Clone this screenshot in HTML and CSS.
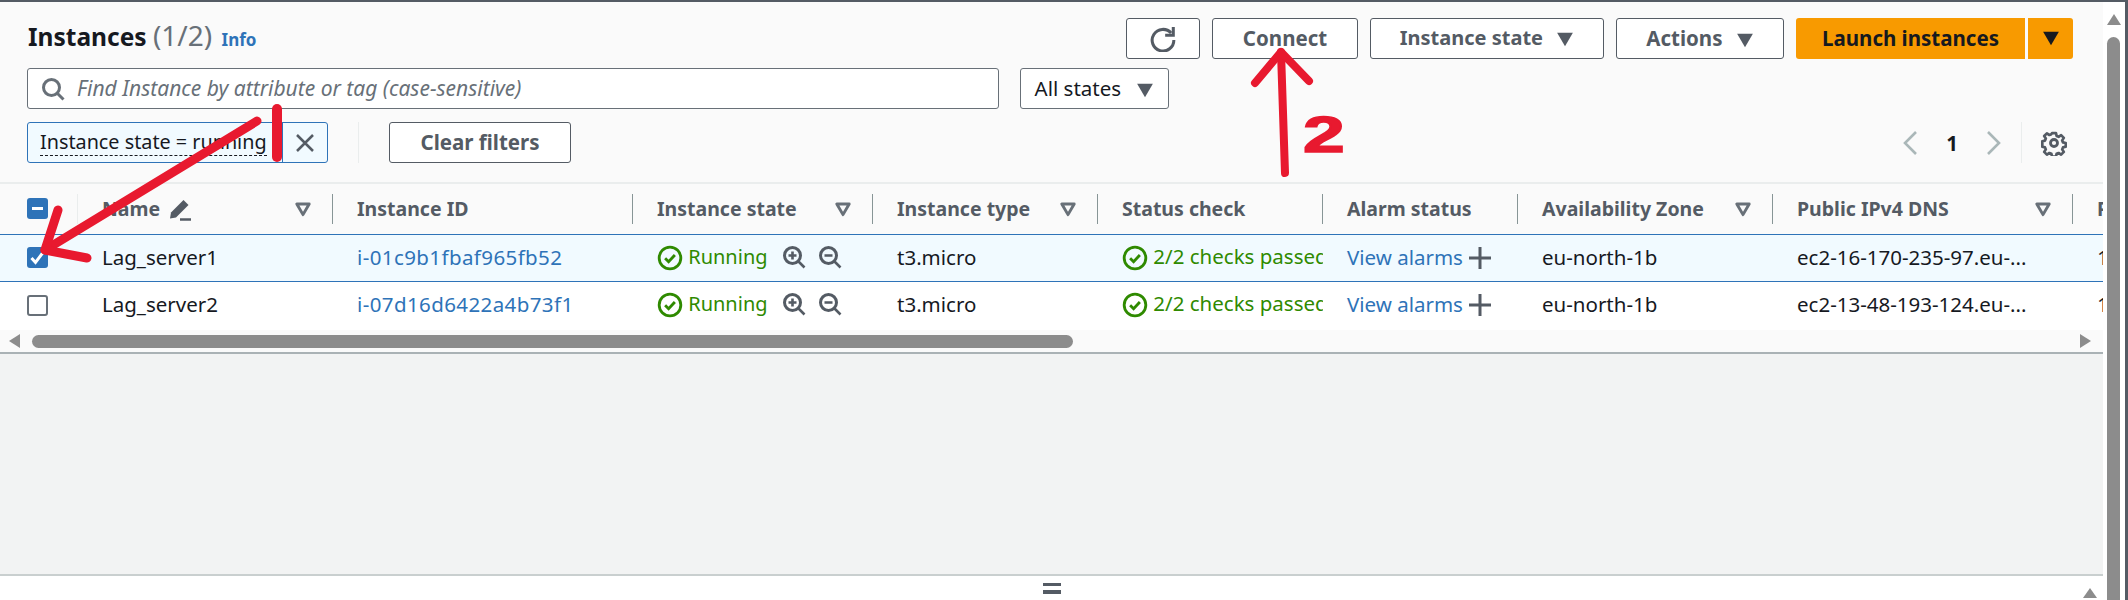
FILE: index.html
```html
<!DOCTYPE html>
<html lang="en">
<head>
    <meta charset="UTF-8">
    <title>Instances</title>
    <link rel="stylesheet" href="styles.css">
</head>
<body>

    <svg class="defs" width="0" height="0">
        <symbol id="caret" viewBox="0 0 16 16"><path d="M1 2.500h14L8 14.500z" fill="currentColor"/></symbol>
        <symbol id="sort" viewBox="0 0 16 16"><path d="M2.500 3.500h11L8 13z" fill="none" stroke="currentColor" stroke-width="2.600" stroke-linejoin="round"/></symbol>
        <symbol id="ok" viewBox="0 0 24 24"><circle cx="12" cy="12" r="10" fill="none" stroke="currentColor" stroke-width="2.600"/><path d="M7.500 12.300l3.200 3.200 5.800-6.300" fill="none" stroke="currentColor" stroke-width="2.600"/></symbol>
        <symbol id="zoom-in" viewBox="0 0 24 24"><circle cx="10.500" cy="10.500" r="8" fill="none" stroke="currentColor" stroke-width="3"/><path d="M16.500 16.500l6 6M6.500 10.500h8M10.500 6.500v8" fill="none" stroke="currentColor" stroke-width="2.600"/></symbol>
        <symbol id="zoom-out" viewBox="0 0 24 24"><circle cx="10.500" cy="10.500" r="8" fill="none" stroke="currentColor" stroke-width="3"/><path d="M16.500 16.500l6 6M6.500 10.500h8" fill="none" stroke="currentColor" stroke-width="2.600"/></symbol>
        <symbol id="plus" viewBox="0 0 24 24"><path d="M1 12h22M12 1v22" fill="none" stroke="currentColor" stroke-width="3"/></symbol>
    </svg>

    <div class="window">
        <div class="content">
            <div class="panel">
                <div class="head">
                    <div class="head-row">
                        <h1 class="title">Instances <span class="count">(1/2)</span> <a class="info">Info</a></h1>
                        <div class="actions">
                            <button class="btn btn-icon">
                                <svg width="26" height="26" viewBox="0 0 24 24"><path d="M19.500 6.500A10 10 0 1 0 22 13" fill="none" stroke="currentColor" stroke-width="2.800"/><path d="M21.500 1v7.500H14" fill="none" stroke="currentColor" stroke-width="2.800"/></svg>
                            </button>
                            <button class="btn btn-connect">Connect</button>
                            <button class="btn btn-state">Instance state <svg class="caret" width="18" height="18"><use href="#caret"/></svg></button>
                            <button class="btn btn-actions">Actions <svg class="caret" width="18" height="18"><use href="#caret"/></svg></button>
                            <div class="launch">
                                <button class="launch-main">Launch instances</button>
                                <button class="launch-more"><svg width="18" height="18"><use href="#caret"/></svg></button>
                            </div>
                        </div>
                    </div>

                    <div class="search-row">
                        <div class="search">
                            <svg width="24" height="24" viewBox="0 0 24 24"><circle cx="10.500" cy="10.500" r="8" fill="none" stroke="currentColor" stroke-width="3"/><path d="M16 16l6.500 6.500" stroke="currentColor" stroke-width="3"/></svg>
                            <span class="search-text">Find Instance by attribute or tag (case-sensitive)</span>
                        </div>
                        <button class="states">All states <svg class="caret" width="18" height="18"><use href="#caret"/></svg></button>
                    </div>

                    <div class="filter-row">
                        <div class="chip">
                            <span class="chip-text"><span class="chip-label">Instance state = running</span></span>
                            <span class="chip-close">
                                <svg width="20" height="20" viewBox="0 0 20 20"><path d="M2 2l16 16M18 2L2 18" stroke="currentColor" stroke-width="2.500"/></svg>
                            </span>
                        </div>
                        <div class="filter-sep"></div>
                        <button class="btn btn-clear">Clear filters</button>
                        <div class="pager">
                            <svg class="pager-arrow" width="16" height="26" viewBox="0 0 16 26"><path d="M14 2L3 13l11 11" fill="none" stroke="currentColor" stroke-width="2.600"/></svg>
                            <span class="pager-num">1</span>
                            <svg class="pager-arrow" width="16" height="26" viewBox="0 0 16 26"><path d="M2 2l11 11L2 24" fill="none" stroke="currentColor" stroke-width="2.600"/></svg>
                            <div class="pager-sep"></div>
                            <svg class="gear" width="26" height="26" viewBox="0 0 26 26"><path d="M10.800 2h4.400l.7 3.200 2.200.9 2.800-1.800 3 3-1.800 2.800.9 2.200 3 .7v4.200l-3 .7-.9 2.200 1.800 2.800-3 3-2.800-1.800-2.200.9-.7 3h-4.400l-.7-3-2.200-.9-2.800 1.800-3-3 1.800-2.800-.9-2.200-3-.7V11l3-.7.9-2.200-1.800-2.800 3-3 2.800 1.800 2.200-.9z" transform="translate(1.300 1.300) scale(.9)" fill="none" stroke="currentColor" stroke-width="3" stroke-linejoin="round"/><circle cx="13" cy="13" r="3.500" fill="none" stroke="currentColor" stroke-width="2.800"/></svg>
                        </div>
                    </div>
                </div>

                <div class="table-wrap">
                    <table class="grid">
                        <colgroup>
                            <col class="c-check"><col class="c-name"><col class="c-id"><col class="c-state"><col class="c-type"><col class="c-status"><col class="c-alarm"><col class="c-zone"><col class="c-dns"><col class="c-ip">
                        </colgroup>
                        <thead>
                            <tr>
                                <th class="cell-check"><div class="th-in th-check"><span class="box box-on"><span class="dash"></span></span></div></th>
                                <th><div class="th-in">Name
                                    <svg class="pencil" width="24" height="24" viewBox="0 0 24 24"><path d="M15.500 3l5 5L8 20.500l-6 1 1-6z" fill="currentColor"/><path d="M12 22.500h11" stroke="currentColor" stroke-width="2.500"/></svg>
                                    <svg class="sort" width="18" height="18"><use href="#sort"/></svg></div></th>
                                <th><div class="th-in">Instance ID</div></th>
                                <th><div class="th-in">Instance state <svg class="sort" width="18" height="18"><use href="#sort"/></svg></div></th>
                                <th><div class="th-in">Instance type <svg class="sort" width="18" height="18"><use href="#sort"/></svg></div></th>
                                <th><div class="th-in">Status check</div></th>
                                <th><div class="th-in">Alarm status</div></th>
                                <th><div class="th-in">Availability Zone <svg class="sort" width="18" height="18"><use href="#sort"/></svg></div></th>
                                <th><div class="th-in">Public IPv4 DNS <svg class="sort" width="18" height="18"><use href="#sort"/></svg></div></th>
                                <th><div class="th-in th-last">Public IPv4</div></th>
                            </tr>
                        </thead>
                        <tbody>
                            <tr class="selected">
                                <td class="cell-check"><span class="box box-on"><svg width="21" height="21" viewBox="0 0 21 21"><path d="M4.500 11l4 4.500 7.500-10" fill="none" stroke="#fff" stroke-width="3"/></svg></span></td>
                                <td>Lag_server1</td>
                                <td><a class="link link-id">i-01c9b1fbaf965fb52</a></td>
                                <td><div class="state-cell"><span class="good good-short"><svg width="26" height="26"><use href="#ok"/></svg> Running</span><svg class="tool" width="24" height="24"><use href="#zoom-in"/></svg><svg class="tool" width="24" height="24"><use href="#zoom-out"/></svg></div></td>
                                <td>t3.micro</td>
                                <td><span class="good"><svg width="26" height="26"><use href="#ok"/></svg> 2/2 checks passed</span></td>
                                <td><a class="link">View alarms</a> <svg class="add" width="24" height="24"><use href="#plus"/></svg></td>
                                <td>eu-north-1b</td>
                                <td>ec2-16-170-235-97.eu-...</td>
                                <td>16.170.235.97</td>
                            </tr>
                            <tr>
                                <td class="cell-check"><span class="box"></span></td>
                                <td>Lag_server2</td>
                                <td><a class="link link-id">i-07d16d6422a4b73f1</a></td>
                                <td><div class="state-cell"><span class="good good-short"><svg width="26" height="26"><use href="#ok"/></svg> Running</span><svg class="tool" width="24" height="24"><use href="#zoom-in"/></svg><svg class="tool" width="24" height="24"><use href="#zoom-out"/></svg></div></td>
                                <td>t3.micro</td>
                                <td><span class="good"><svg width="26" height="26"><use href="#ok"/></svg> 2/2 checks passed</span></td>
                                <td><a class="link">View alarms</a> <svg class="add" width="24" height="24"><use href="#plus"/></svg></td>
                                <td>eu-north-1b</td>
                                <td>ec2-13-48-193-124.eu-...</td>
                                <td>13.48.193.124</td>
                            </tr>
                        </tbody>
                    </table>
                </div>

                <div class="hscroll">
                    <span class="arrow-left"></span>
                    <span class="hthumb"></span>
                    <span class="arrow-right"></span>
                </div>
            </div>

            <div class="empty"></div>

            <div class="split">
                <span class="split-handle"></span>
                <span class="split-up"></span>
            </div>
        </div>

        <div class="vscroll">
            <span class="arrow-up"></span>
            <span class="vthumb"></span>
        </div>

        <!-- red marks drawn over the screenshot -->
        <svg class="marks" width="2128" height="600" viewBox="0 0 2128 600">
            <g fill="none" stroke="#e8192f" stroke-width="9" stroke-linecap="round" stroke-linejoin="round">
                <path d="M257 121L45 250"/>
                <path d="M58 210L45 250L87 258"/>
                <path d="M277 109V157" stroke-width="10"/>
                <path d="M1285 173L1281 52" stroke-width="8"/>
                <path d="M1255 83L1281 52L1309 81" stroke-width="8"/>
            </g>
        </svg>
        <span class="mark-two">2</span>
    </div>

</body>
</html>
```

FILE: styles.css
```css
* {
    box-sizing: border-box;
}
html, body {
    margin: 0;
    height: 100%;
    overflow: hidden;
}
body {
    font-family: "Noto Sans", Arial, sans-serif;
    font-size: 20.5px;
    color: #16191f;
    background-color: #ffffff;
}
button {
    font-family: inherit;
    font-size: 20.5px;
}
.defs {
    position: absolute;
}
.window {
    position: relative;
    display: flex;
    width: 2128px;
    height: 600px;
    border-top: 2px solid #545b64;
}
.content {
    width: 2103px;
    display: flex;
    flex-direction: column;
}
.panel {
    height: 352px;
    background-color: #fafafa;
    border-bottom: 2px solid #aab2b5;
}
.head {
    height: 182px;
    padding: 16px 30px 0 27px;
    border-bottom: 2px solid #eaeded;
}
.head-row {
    display: flex;
    justify-content: space-between;
    height: 41px;
}
.title {
    margin: 0 0 0 1px;
    font-size: 24.5px;
    font-weight: 700;
    line-height: 34px;
    white-space: nowrap;
}
.count {
    font-size: 28px;
    font-weight: 400;
    color: #687078;
}
.info {
    margin-left: 3px;
    font-size: 17px;
    font-weight: 700;
    color: #2e73b8;
}
.actions {
    display: flex;
    gap: 12px;
}
.btn {
    height: 41px;
    padding: 0 0 2px;
    background-color: #ffffff;
    border: 1px solid #545b64;
    border-radius: 3px;
    color: #545b64;
    font-weight: 700;
}
.btn-icon {
    width: 74px;
    display: flex;
    align-items: center;
    justify-content: center;
    padding: 0;
}
.btn-connect {
    width: 146px;
}
.btn-state {
    width: 234px;
    font-size: 20px;
}
.btn-actions {
    width: 168px;
}
.caret {
    margin-left: 8px;
    vertical-align: -3px;
}
.launch {
    display: flex;
    gap: 3px;
}
.launch-main, .launch-more {
    height: 41px;
    padding: 0 0 2px;
    border: none;
    background-color: #f89a00;
    color: #16191f;
    font-weight: 700;
}
.launch-main {
    width: 229px;
    border-radius: 3px 0 0 3px;
}
.launch-more {
    width: 45px;
    border-radius: 0 3px 3px 0;
    display: flex;
    align-items: center;
    justify-content: center;
}
.search-row {
    display: flex;
    gap: 21px;
    margin-top: 9px;
}
.search {
    width: 972px;
    height: 41px;
    display: flex;
    align-items: center;
    gap: 12px;
    padding-left: 13px;
    background-color: #ffffff;
    border: 1px solid #687078;
    border-radius: 3px;
    color: #687078;
    font-size: 21px;
    font-style: italic;
}
.search-text {
    padding-bottom: 2px;
}
.states {
    width: 149px;
    height: 41px;
    padding: 0 0 2px;
    background-color: #ffffff;
    border: 1px solid #687078;
    border-radius: 3px;
    color: #16191f;
}
.states .caret {
    margin-left: 10px;
    color: #545b64;
}
.filter-row {
    display: flex;
    align-items: center;
    margin-top: 13px;
    height: 41px;
}
.chip {
    display: flex;
    width: 301px;
    height: 41px;
    background-color: #f1faff;
    border: 1px solid #2e73b8;
    border-radius: 3px;
}
.chip-text {
    width: 255px;
    padding-left: 12px;
    border-right: 1px solid #2e73b8;
    font-size: 19.8px;
    white-space: nowrap;
    overflow: hidden;
    line-height: 38px;
}
.chip-label {
    border-bottom: 1px dashed #16191f;
}
.chip-close {
    flex: 1;
    display: flex;
    align-items: center;
    justify-content: center;
    color: #545b64;
}
.filter-sep {
    width: 1px;
    height: 41px;
    margin: 0 30px;
    background-color: #eaeded;
}
.btn-clear {
    width: 182px;
}
.pager {
    margin-left: auto;
    display: flex;
    align-items: center;
}
.pager-arrow {
    color: #aab7b8;
}
.pager-num {
    width: 68px;
    text-align: center;
    font-weight: 700;
}
.pager-sep {
    width: 1px;
    height: 41px;
    margin: 0 19px;
    background-color: #eaeded;
}
.gear {
    color: #545b64;
    margin-right: 6px;
}
.table-wrap {
    height: 146px;
    overflow: hidden;
}
.grid {
    width: 2373px;
    table-layout: fixed;
    border-collapse: collapse;
}
.c-check { width: 78px; }
.c-name { width: 255px; }
.c-id { width: 300px; }
.c-state { width: 240px; }
.c-type { width: 225px; }
.c-status { width: 225px; }
.c-alarm { width: 195px; }
.c-zone { width: 255px; }
.c-dns { width: 300px; }
.c-ip { width: 300px; }
th {
    height: 50px;
    padding: 0;
    text-align: left;
    font-size: 19.5px;
    font-weight: 700;
    color: #545b64;
}
.th-in {
    height: 30px;
    display: flex;
    align-items: center;
    padding-left: 24px;
    padding-right: 20px;
    border-right: 1px solid #879596;
    white-space: nowrap;
}
.th-check {
    padding-left: 27px;
    border-right-color: #eaeded;
}
.th-last {
    border-right: none;
}
.sort {
    margin-left: auto;
    color: #687078;
}
.pencil {
    margin-left: 8px;
    color: #545b64;
}
td {
    height: 49px;
    padding: 0 0 4px 24px;
    background-color: #ffffff;
    white-space: nowrap;
    overflow: hidden;
}
.selected td {
    height: 47px;
    padding-bottom: 2px;
    background-color: #f1faff;
    border-top: 1px solid #2e73b8;
    border-bottom: 1px solid #2e73b8;
}
td.cell-check {
    padding: 0 0 1px 27px;
}
.box {
    display: block;
    width: 21px;
    height: 21px;
    background-color: #ffffff;
    border: 2px solid #687078;
    border-radius: 3px;
}
.box-on {
    display: flex;
    align-items: center;
    justify-content: center;
    background-color: #2e73b8;
    border: none;
}
.dash {
    width: 11px;
    height: 3px;
    background-color: #ffffff;
}
.link {
    color: #2e73b8;
}
.link-id {
    letter-spacing: .4px;
}
.good {
    color: #2f8a00;
}
.good-short {
    font-size: 20px;
}
.good svg {
    vertical-align: -7px;
}
.state-cell {
    display: flex;
    align-items: center;
}
.tool {
    margin-left: 12px;
    color: #545b64;
}
.tool:first-of-type {
    margin-left: 14px;
}
.add {
    color: #545b64;
    vertical-align: -5px;
}
.hscroll {
    height: 22px;
    position: relative;
    display: flex;
    align-items: center;
    padding-left: 32px;
}
.hthumb {
    width: 1041px;
    height: 13px;
    background-color: #8c8c8c;
    border-radius: 7px;
}
.arrow-left {
    position: absolute;
    left: 9px;
    width: 0;
    height: 0;
    border-top: 7px solid transparent;
    border-bottom: 7px solid transparent;
    border-right: 11px solid #8c8c8c;
}
.arrow-right {
    position: absolute;
    left: 2080px;
    width: 0;
    height: 0;
    border-top: 7px solid transparent;
    border-bottom: 7px solid transparent;
    border-left: 11px solid #8c8c8c;
}
.empty {
    flex: 1;
    background-color: #f2f3f3;
}
.split {
    height: 26px;
    position: relative;
    display: flex;
    align-items: center;
    justify-content: center;
    background-color: #ffffff;
    border-top: 2px solid #c9cfcf;
}
.split-handle {
    width: 18px;
    height: 11px;
    border-top: 3px solid #545b64;
    border-bottom: 4px solid #545b64;
}
.split-up {
    position: absolute;
    right: 6px;
    bottom: 2px;
    width: 0;
    height: 0;
    border-left: 7px solid transparent;
    border-right: 7px solid transparent;
    border-bottom: 10px solid #8c8c8c;
}
.vscroll {
    flex: 1;
    display: flex;
    flex-direction: column;
    align-items: flex-start;
    padding: 12px 0 0 4px;
    background-color: #ffffff;
    border-right: 3px solid #545b64;
}
.arrow-up {
    width: 0;
    height: 0;
    border-left: 7px solid transparent;
    border-right: 7px solid transparent;
    border-bottom: 11px solid #8c8c8c;
}
.vthumb {
    flex: 1;
    width: 13px;
    margin-top: 12px;
    background-color: #8c8c8c;
    border-radius: 7px 7px 0 0;
}
.marks {
    position: absolute;
    top: -2px;
    left: 0;
    pointer-events: none;
}
.mark-two {
    position: absolute;
    left: 1303px;
    top: 108px;
    font-family: "Liberation Sans", Arial, sans-serif;
    font-size: 50px;
    font-weight: 700;
    line-height: 50px;
    color: #e8192f;
    -webkit-text-stroke: 1.5px #e8192f;
    transform: scaleX(1.5);
    transform-origin: left center;
}
```
